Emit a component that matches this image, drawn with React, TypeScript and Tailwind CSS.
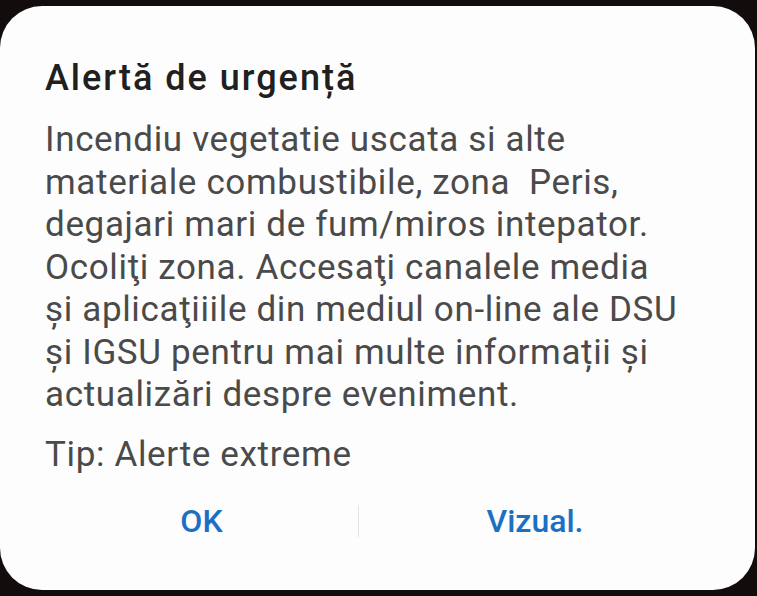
const bodyLines = [
  "Incendiu vegetatie uscata si alte",
  "materiale combustibile, zona  Peris,",
  "degajari mari de fum/miros intepator.",
  "Ocoliţi zona. Accesaţi canalele media",
  "și aplicaţiiile din mediul on-line ale DSU",
  "și IGSU pentru mai multe informații și",
  "actualizări despre eveniment.",
];

export default function App() {
  return (
    <div className="w-[757px] h-[596px] bg-[#120c0c] pt-[6px] pr-[2px] pb-[6px] overflow-hidden font-['Roboto',sans-serif]">
      <div className="h-full bg-[#fdfdfd] rounded-[42px] flex flex-col">
        <div className="px-[45px] pt-[50px]">
          <h1 className="text-[36px] leading-[44px] font-medium text-[#202020] tracking-[2px]">
            Alertă de urgență
          </h1>
          <div className="mt-[19px] text-[35px] leading-[42.5px] tracking-[0.65px] text-[#4a4a4a]">
            {bodyLines.map((line) => (
              <div key={line} className="whitespace-pre">
                {line}
              </div>
            ))}
          </div>
          <p className="mt-[17px] text-[35px] leading-[42.5px] tracking-[0.65px] text-[#4a4a4a]">Tip: Alerte extreme</p>
        </div>

        {/* Buttons */}
        <div className="mt-[25px] flex items-center">
          <button className="w-[358px] text-center text-[32px] leading-[40px] font-medium text-[#1b70c4] pl-[45px]">OK</button>
          <div className="w-px h-[32px] bg-[#e4e4e4]" />
          <button className="flex-1 text-center text-[32px] leading-[40px] font-medium text-[#1b70c4] pr-[44px]">Vizual.</button>
        </div>
      </div>
    </div>
  );
}
